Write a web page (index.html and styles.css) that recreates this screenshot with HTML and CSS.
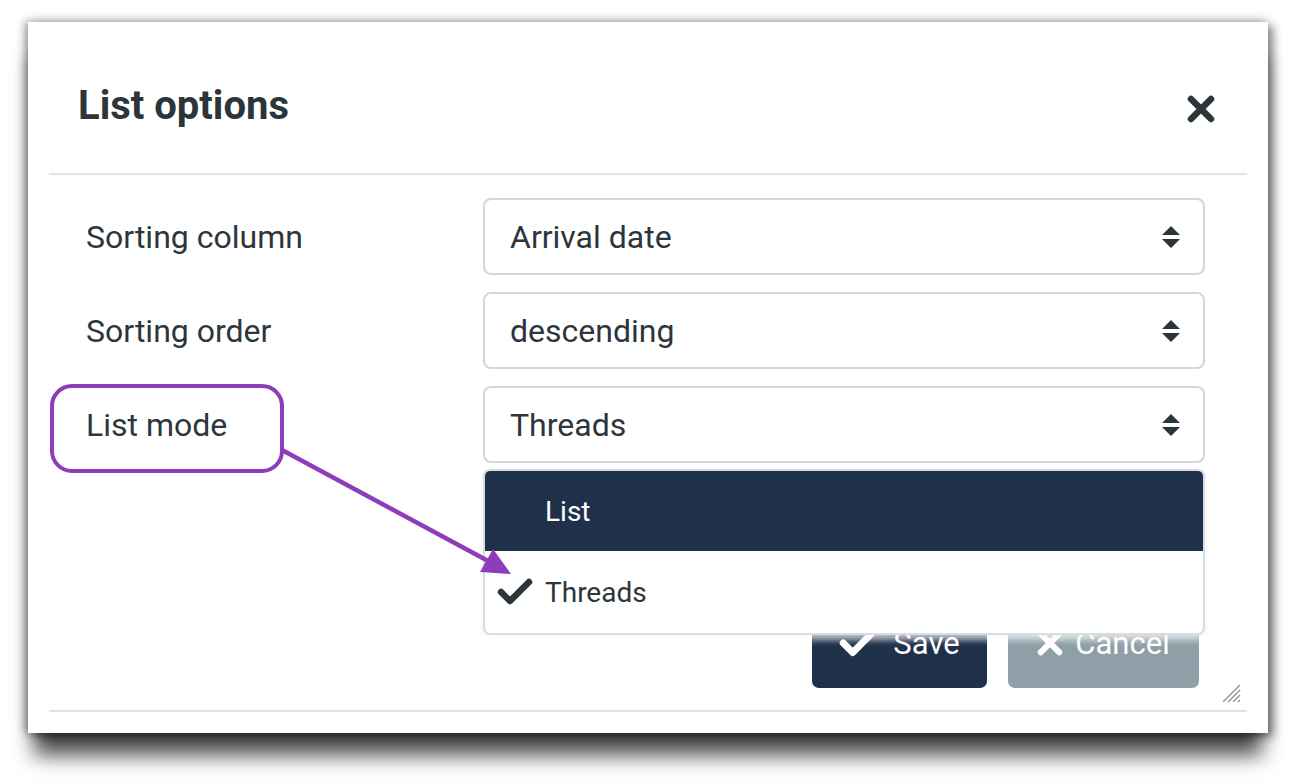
FILE: index.html
```html
<!DOCTYPE html>
<html lang="en">
<head>
<meta charset="utf-8">
<title>List options</title>
<link rel="stylesheet" href="styles.css">
</head>
<body>
<div class="dialog">
  <div class="header">
    <h1 class="title">List options</h1>
    <button class="close" aria-label="Close">
      <svg viewBox="0 0 28 28" width="28" height="28"><path d="M4 4 L24 24 M24 4 L4 24" stroke="#2b353a" stroke-width="6.5" stroke-linecap="round"/></svg>
    </button>
  </div>
  <div class="body">
    <div class="row">
      <label class="label">Sorting column</label>
      <div class="select"><span class="value">Arrival date</span>
        <svg class="sort" viewBox="0 0 20 24" width="20" height="24"><path d="M10 1 L19 10 H1 Z M1 14 H19 L10 23 Z" fill="#2b353a"/></svg>
      </div>
    </div>
    <div class="row">
      <label class="label">Sorting order</label>
      <div class="select"><span class="value">descending</span>
        <svg class="sort" viewBox="0 0 20 24" width="20" height="24"><path d="M10 1 L19 10 H1 Z M1 14 H19 L10 23 Z" fill="#2b353a"/></svg>
      </div>
    </div>
    <div class="row">
      <label class="label">List mode</label>
      <div class="select-wrap">
        <div class="select"><span class="value">Threads</span>
          <svg class="sort" viewBox="0 0 20 24" width="20" height="24"><path d="M10 1 L19 10 H1 Z M1 14 H19 L10 23 Z" fill="#2b353a"/></svg>
        </div>
        <ul class="menu">
          <li class="item active"><span class="check"></span><span>List</span></li>
          <li class="item"><span class="check"><svg viewBox="0 0 36 28" width="36" height="28"><path d="M4 14 L13 23 L32 4" fill="none" stroke="#2b353a" stroke-width="6.5" stroke-linecap="round" stroke-linejoin="round"/></svg></span><span>Threads</span></li>
        </ul>
      </div>
    </div>
  </div>
  <div class="footer">
    <button class="btn btn-save"><svg viewBox="0 0 36 28" width="38" height="30"><path d="M4 14 L13 23 L32 4" fill="none" stroke="#fff" stroke-width="6.5" stroke-linecap="round" stroke-linejoin="round"/></svg>Save</button>
    <button class="btn btn-cancel"><svg viewBox="0 0 28 28" width="26" height="26"><path d="M4 4 L24 24 M24 4 L4 24" stroke="#fff" stroke-width="6.5" stroke-linecap="round"/></svg>Cancel</button>
    <svg class="grip" viewBox="0 0 22 20" width="22" height="20"><path d="M21 3 L4 20 M21 8 L9 20 M21 13 L14 20 M21 18 L19 20" stroke="#8a8f93" stroke-width="1.4"/></svg>
  </div>
</div>
<div class="callout"></div>
<svg class="arrow" viewBox="0 0 1294 784" width="1294" height="784">
  <line x1="282" y1="450" x2="490" y2="562" stroke="#8e3dba" stroke-width="4.5"/>
  <path d="M480 572 L511 574 L493 549 Z" fill="#8e3dba"/>
</svg>
</body>
</html>
```
FILE: styles.css
```css
* { box-sizing: border-box; }
html, body { margin: 0; padding: 0; }
body {
  width: 1294px;
  height: 784px;
  overflow: hidden;
  background: #ffffff;
  font-family: Roboto, "Liberation Sans", sans-serif;
  color: #2c363c;
  position: relative;
}
.dialog {
  margin: 22px 0 0 28px;
  width: 1240px;
  height: 711px;
  background: #fff;
  padding: 0 21px 21px;
  display: flex;
  flex-direction: column;
  position: relative;
  box-shadow:
    0 28px 20px -6px rgba(0,0,0,0.72),
    6px 4px 8px rgba(0,0,0,0.35),
    -3px 0 8px rgba(0,0,0,0.35),
    0 -2px 14px rgba(0,0,0,0.12);
}
.header {
  height: 153px;
  flex: none;
  border-bottom: 2px solid #e2e4e6;
  display: flex;
  justify-content: space-between;
  align-items: flex-start;
  padding: 60px 32px 0 29px;
}
.title {
  margin: 0;
  font-size: 40px;
  line-height: 48px;
  font-weight: 700;
  color: #2b353a;
}
.close {
  margin-top: 13px;
  border: 0;
  padding: 0;
  background: none;
  width: 28px;
  height: 28px;
  display: flex;
}
.body {
  padding: 23px 42px 0 37px;
  display: flex;
  flex-direction: column;
  gap: 17px;
}
.row {
  display: grid;
  grid-template-columns: 1fr 722px;
  align-items: center;
  height: 77px;
}
.label {
  font-size: 32px;
  color: #2c363c;
}
.select-wrap { position: relative; }
.select {
  height: 77px;
  border: 2px solid #d3d7da;
  border-radius: 8px;
  display: flex;
  align-items: center;
  justify-content: space-between;
  padding: 0 22px 0 25px;
  font-size: 32px;
  color: #2c363c;
  background: #fff;
}
.sort { display: block; }
.menu {
  position: absolute;
  top: calc(100% + 6px);
  left: 0;
  width: 100%;
  margin: 0;
  padding: 0;
  list-style: none;
  background: #fff;
  border: 2px solid #d8dde1;
  border-radius: 7px;
  overflow: hidden;
  z-index: 5;
  box-shadow: 0 5px 6px 0 rgba(255,255,255,0.7), 0 1px 4px rgba(0,0,0,0.1);
}
.item {
  display: flex;
  align-items: center;
  height: 80px;
  padding-left: 12px;
  font-size: 28px;
  color: #2c363c;
}
.item.active {
  background: #1e304a;
  color: #fff;
}
.item + .item { height: 82px; }
.check {
  width: 48px;
  display: flex;
  align-items: center;
}
.footer {
  margin-top: auto;
  border-bottom: 2px solid #dfe3e7;
  padding: 0 48px 22px 0;
  display: flex;
  justify-content: flex-end;
  gap: 21px;
  position: relative;
}
.btn {
  height: 104px;
  border: 0;
  border-radius: 7px;
  color: #fff;
  font-family: Roboto, "Liberation Sans", sans-serif;
  font-size: 31px;
  display: flex;
  align-items: center;
  justify-content: center;
  gap: 16px;
  padding: 14px 0 0 0;
}
.btn-save { width: 175px; background: #1e304a; }
.btn-cancel { width: 191px; background: #8e9fa7; gap: 12px; }
.grip {
  position: absolute;
  right: 6px;
  bottom: 8px;
}
.callout {
  position: absolute;
  left: 50px;
  top: 384px;
  width: 234px;
  height: 89px;
  border: 4.5px solid #8e3dba;
  border-radius: 22px;
  z-index: 10;
}
.arrow {
  position: absolute;
  left: 0;
  top: 0;
  z-index: 10;
  pointer-events: none;
}
```
